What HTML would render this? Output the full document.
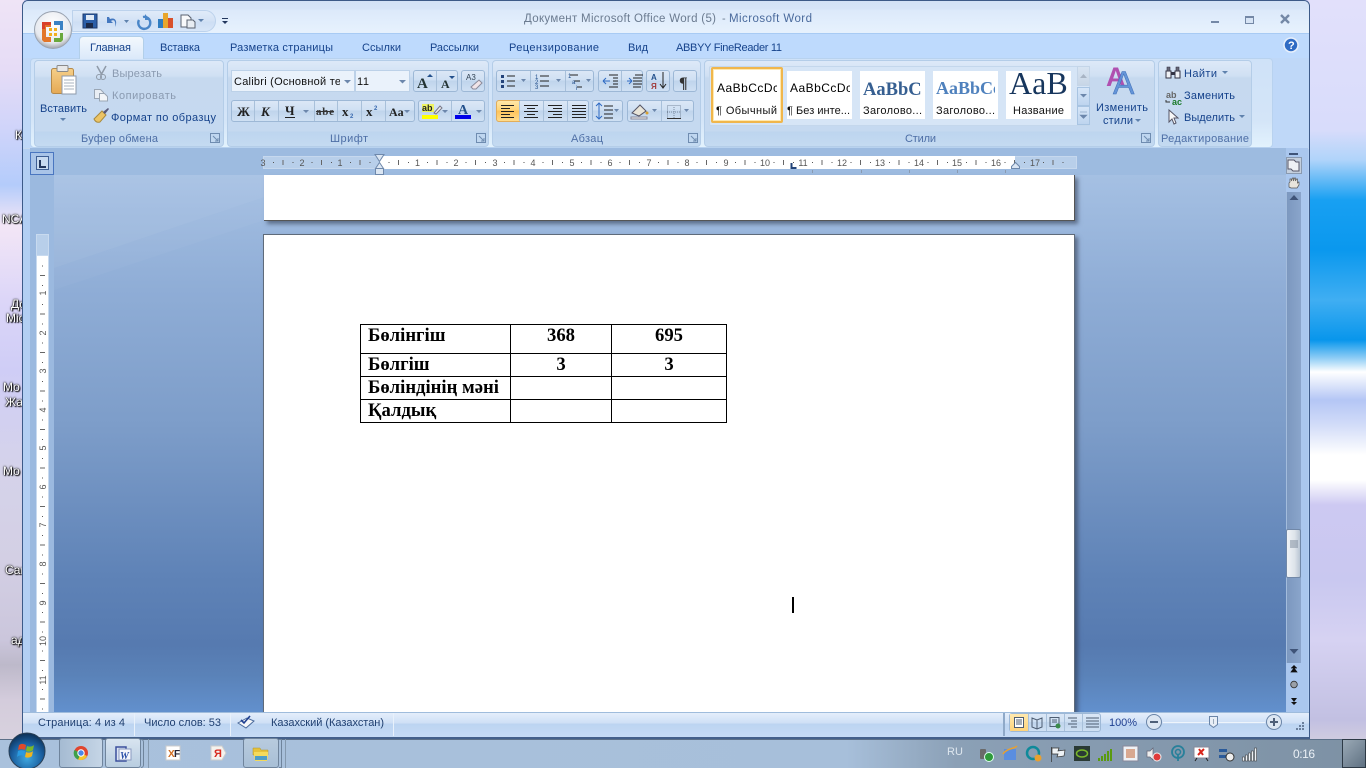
<!DOCTYPE html>
<html lang="ru"><head><meta charset="utf-8"><title>Документ Microsoft Office Word (5) - Microsoft Word</title>
<style>
html,body{margin:0;padding:0;width:1366px;height:768px;overflow:hidden;background:#c8c8f0}
div{position:absolute;box-sizing:border-box}
svg{position:absolute;left:0;top:0}
text{font-family:"Liberation Sans",sans-serif;font-size:11px;fill:#15428b}
.g{fill:#8a9ab0}.c{fill:#4e6fa6}.k{fill:#111}
.grp{top:60px;height:87px;border:1px solid #b4cde8;border-radius:4px;background:linear-gradient(#dde9f8 0,#d0e0f3 15px,#c6d9ef 17px,#c5d9f0 70px,#bdd5ef 71px,#c4daf1 100%)}
.btn{border:1px solid #9db8d6;border-radius:3px;background:linear-gradient(#dbe7f6,#cfe0f3 45%,#bfd4ec 50%,#cfe0f3)}
.dl{position:absolute;font:12px "Liberation Sans",sans-serif;color:#fff;text-shadow:1px 1px 1px #000,0 0 2px #000,0 0 1px #000;white-space:nowrap}
table{position:absolute;left:360px;top:324px;width:366px;height:99px;border-collapse:collapse;table-layout:fixed;font:bold 18.67px "Liberation Serif",serif;color:#000}
td{border:1px solid #000;padding:0 0 0 7px;line-height:21px;vertical-align:top;white-space:nowrap}
td.m{text-align:center;padding:0}
</style></head><body>
<!-- desktop -->
<div style="left:0;top:0;width:24px;height:740px;background:linear-gradient(#efe4f6 0,#e6dcf6 70px,#cfd4fa 130px,#b4ccfb 185px,#f3e6f6 225px,#dcd6f8 300px,#cfcdf6 370px,#d5d3ea 470px,#d3cfe4 560px,#cbc6dc 640px,#bdb9ca 665px,#d4ccdc 700px,#d8d2de 740px)"></div>
<div style="left:1308px;top:0;width:58px;height:740px;background:linear-gradient(#e2e0fb 0,#d8dcfb 130px,#b0d4fa 160px,#18a0f2 200px,#0a98ee 250px,#40aef2 300px,#0896ec 340px,#8ecdf5 358px,#fff 372px,#b4c6f5 400px,#d2dcf8 425px,#fff 455px,#fff 480px,#cdc9f2 505px,#c9c8f0 580px,#d6d2f2 640px,#c2c0e2 720px,#d0cce0 740px)"></div>
<span class="dl" style="left:15px;top:128px">К</span>
<span class="dl" style="left:2px;top:212px">NCA</span>
<span class="dl" style="left:11px;top:297px">До</span>
<span class="dl" style="left:6px;top:311px">Mic</span>
<span class="dl" style="left:3px;top:380px">Мо</span>
<span class="dl" style="left:5px;top:395px">Жа</span>
<span class="dl" style="left:3px;top:464px">Мо</span>
<span class="dl" style="left:5px;top:563px">Сан</span>
<span class="dl" style="left:11px;top:633px">ад</span>

<!-- window -->
<div style="left:22px;top:0;width:1288px;height:739px;background:#b3cff3;border:1px solid #3c5a88;border-bottom:2px solid #44608a;border-radius:6px 6px 0 0;overflow:hidden">
 <div style="left:0;top:0;width:100%;height:32px;background:linear-gradient(#d3e2f6 0,#d6e5f8 8px,#dce9fa 9px,#e6f1fd 30px)"></div>
 <div style="left:0;top:32px;width:100%;height:1px;background:#a8cbf4"></div>
 <div style="left:0;top:33px;width:100%;height:25px;background:#bedafd"></div>
 <div style="left:0;top:57px;width:100%;height:91px;background:#bfd8f8"></div>
 <div style="left:1px;top:147px;width:1285px;height:1px;background:#c6d9ee"></div>
</div>
<!-- ribbon container -->
<div style="left:30px;top:58px;width:1243px;height:90px;border:1px solid #b8d2ef;border-radius:4px;background:linear-gradient(#cfe2f8,#d4e5f8 70%,#e2f2fd)"></div>
<!-- active tab -->
<div style="left:79px;top:36px;width:65px;height:23px;border:1px solid #b2cfe9;border-bottom:0;border-radius:4px 4px 0 0;background:linear-gradient(#f3f8fd,#dbe9fa)"></div>
<!-- QAT pill -->
<div style="left:72px;top:10px;width:144px;height:22px;border:1px solid #bcd2ec;border-radius:0 11px 11px 0;background:linear-gradient(#e0ebf9,#d3e2f5 50%,#cddef4 55%,#d8e6f8)"></div>
<!-- groups -->
<div class="grp" style="left:34px;width:190px"></div>
<div class="grp" style="left:227px;width:262px"></div>
<div class="grp" style="left:492px;width:209px"></div>
<div class="grp" style="left:704px;width:451px"></div>
<div class="grp" style="left:1158px;width:94px"></div>
<!-- font boxes -->
<div style="left:231px;top:70px;width:124px;height:22px;background:#eaf2fb;border:1px solid #bcd1e8"></div>
<div style="left:355px;top:70px;width:55px;height:22px;background:#eaf2fb;border:1px solid #bcd1e8"></div>
<div class="btn" style="left:413px;top:70px;width:45px;height:22px"></div>
<div class="btn" style="left:461px;top:70px;width:24px;height:22px"></div>
<div class="btn" style="left:231px;top:100px;width:184px;height:22px"></div>
<div class="btn" style="left:418px;top:100px;width:67px;height:22px"></div>
<!-- paragraph buttons -->
<div class="btn" style="left:496px;top:70px;width:98px;height:22px"></div>
<div class="btn" style="left:598px;top:70px;width:45px;height:22px"></div>
<div class="btn" style="left:646px;top:70px;width:24px;height:22px"></div>
<div class="btn" style="left:673px;top:70px;width:24px;height:22px"></div>
<div class="btn" style="left:496px;top:100px;width:93px;height:22px"></div>
<div style="left:496px;top:100px;width:24px;height:22px;border:1px solid #e2ad5a;border-radius:3px 0 0 3px;background:linear-gradient(#ffe7a8,#ffd57a 45%,#fdc35a 50%,#ffdc8c)"></div>
<div class="btn" style="left:592px;top:100px;width:31px;height:22px"></div>
<div class="btn" style="left:627px;top:100px;width:67px;height:22px"></div>
<!-- style gallery -->
<div style="left:709px;top:66px;width:381px;height:60px;background:#d6e5f6;border:1px solid #c4d7ec;border-radius:2px"></div>
<div style="left:711px;top:67px;width:72px;height:56px;border:2px solid #f0b64c;border-radius:2px;background:#fff;box-shadow:inset 0 0 0 1px #ffe9b0"></div>
<div style="left:787px;top:71px;width:65px;height:48px;background:#fff"></div>
<div style="left:860px;top:71px;width:65px;height:48px;background:#fff"></div>
<div style="left:933px;top:71px;width:65px;height:48px;background:#fff"></div>
<div style="left:1006px;top:71px;width:65px;height:48px;background:#fff"></div>
<div style="left:1077px;top:66px;width:13px;height:20px;background:linear-gradient(#d8e4f2,#c8d6e6);border:1px solid #c4d5e8"></div>
<div style="left:1077px;top:87px;width:13px;height:19px;background:linear-gradient(#d6e6f8,#bed5ef);border:1px solid #a8c4e2"></div>
<div style="left:1077px;top:106px;width:13px;height:19px;background:linear-gradient(#d6e6f8,#bed5ef);border:1px solid #a8c4e2"></div>

<!-- ruler strip + doc area -->
<div style="left:30px;top:148px;width:1256px;height:27px;background:#9dbbe0"></div>
<div style="left:30px;top:175px;width:24px;height:537px;background:#9bb9df"></div>
<div style="left:54px;top:175px;width:1232px;height:537px;background:linear-gradient(#a5c0e3 0,#8fadd6 115px,#7d9dc9 250px,#5f83b7 400px,#567ab0 470px,#5a82b8 500px,#6290cd 537px)"></div>
<svg width="1366" height="768" style="pointer-events:none"><polygon points="54,268 330,175 54,175" fill="#fff" opacity=".07"/><polygon points="54,290 400,175 330,175 54,268" fill="#fff" opacity=".03"/></svg>
<div style="left:1286px;top:148px;width:22px;height:564px;background:#aac7ee"></div>
<div style="left:1286px;top:192px;width:15px;height:471px;background:linear-gradient(90deg,#7c98bf,#8aa5cb);border-left:1px solid #a3bcdc"></div>
<div style="left:1286px;top:529px;width:15px;height:49px;border:1px solid #7188a8;border-radius:2px;background:linear-gradient(90deg,#f0f3f7,#dde3ea 60%,#b9c5d4)"></div>
<div style="left:1286px;top:157px;width:16px;height:17px;background:#c4cfdd;border:1px solid #8a9ab0"></div>
<div style="left:30px;top:152px;width:24px;height:23px;background:#a9c4e8;border:1px solid #4a76c0"></div>
<div style="left:36px;top:156px;width:13px;height:14px;background:#c8daf0;border:1px solid #3f5f94"></div>
<!-- h ruler -->
<div style="left:263px;top:156px;width:814px;height:13px;background:#b8cfea;border:1px solid #c6d8ee"></div>
<div style="left:379px;top:156px;width:636px;height:13px;background:#fff"></div>
<!-- v ruler -->
<div style="left:36px;top:234px;width:13px;height:22px;background:#b8cfea;border:1px solid #c8daef"></div>
<div style="left:36px;top:256px;width:13px;height:456px;background:#fff;border-left:1px solid #c8daef;border-right:1px solid #c8daef"></div>

<!-- pages -->
<div style="left:264px;top:175px;width:811px;height:46px;background:#fff;border-right:1px solid #555;border-bottom:1px solid #555;box-shadow:3px 3px 4px rgba(40,50,70,.55)"></div>
<div style="left:263px;top:234px;width:812px;height:478px;background:#fff;border:1px solid #5f6b7a;border-bottom:0;box-shadow:3px 3px 4px rgba(40,50,70,.55)"></div>
<table>
<colgroup><col style="width:150px"><col style="width:101px"><col style="width:115px"></colgroup>
<tr style="height:29px"><td>Бөлінгіш</td><td class="m">368</td><td class="m">695</td></tr>
<tr style="height:23px"><td>Бөлгіш</td><td class="m">3</td><td class="m">3</td></tr>
<tr style="height:23px"><td>Бөліндінің мәні</td><td></td><td></td></tr>
<tr style="height:23px"><td>Қалдық</td><td></td><td></td></tr>
</table>
<div style="left:792px;top:597px;width:2px;height:16px;background:#000"></div>

<!-- status bar -->
<div style="left:23px;top:712px;width:1286px;height:25px;background:linear-gradient(#e4eefb 0,#cfe0f6 10px,#bcd4f1 11px,#c6dbf5 100%);border-top:1px solid #9fbcdc"></div>
<div style="left:134px;top:713px;width:1px;height:23px;background:#e8f1fb"></div>
<div style="left:230px;top:713px;width:1px;height:23px;background:#e8f1fb"></div>
<div style="left:393px;top:713px;width:1px;height:23px;background:#e8f1fb"></div>
<div style="left:1003px;top:713px;width:2px;height:23px;background:#8fa9c8"></div>
<div class="btn" style="left:1009px;top:713px;width:92px;height:19px;border-radius:3px"></div>
<div style="left:1010px;top:714px;width:18px;height:17px;background:linear-gradient(#ffe9ae,#ffd47a)"></div>

<!-- taskbar -->
<div style="left:0;top:739px;width:1366px;height:29px;background:linear-gradient(90deg,#a9c1dc 0,#a7bfda 62%,#8ba0b6 70%,#7d91a4 100%);border-top:1px solid #5c7088"></div>
<div style="left:59px;top:738px;width:44px;height:30px;border:1px solid #6f849c;border-radius:3px;background:linear-gradient(90deg,#a5bbd2,#c5d5e6)"></div>
<div style="left:105px;top:738px;width:36px;height:30px;border:1px solid #6f849c;border-radius:3px;background:linear-gradient(#d8e4f0,#b8cde0)"></div>
<div style="left:141px;top:739px;width:3px;height:29px;border:1px solid #6f849c;border-left:0;border-radius:0 3px 3px 0"></div>
<div style="left:148px;top:739px;width:1px;height:29px;background:#8499af"></div>
<div style="left:243px;top:738px;width:36px;height:30px;border:1px solid #6f849c;border-radius:3px;background:linear-gradient(#b8cbde,#a8bfd6)"></div>
<div style="left:279px;top:739px;width:3px;height:29px;border:1px solid #6f849c;border-left:0"></div>
<div style="left:285px;top:739px;width:1px;height:29px;background:#8499af"></div>
<div style="left:1342px;top:739px;width:24px;height:29px;background:linear-gradient(135deg,#9aa9b6,#5f7182);border:1px solid #2d3a46"></div>

<!-- overlay: text and icons -->
<svg width="1366" height="768" viewBox="0 0 1366 768">
<defs>
<pattern id="hr" x="379" y="156" width="38.5" height="13" patternUnits="userSpaceOnUse"><rect x="9.5" y="6" width="1" height="1" fill="#555"/><rect x="19" y="4" width="1" height="5" fill="#666"/><rect x="29" y="6" width="1" height="1" fill="#555"/></pattern>
<pattern id="vr" x="36" y="256" width="13" height="38.5" patternUnits="userSpaceOnUse"><rect x="6" y="9.5" width="1" height="1" fill="#555"/><rect x="4" y="19" width="5" height="1" fill="#666"/><rect x="6" y="29" width="1" height="1" fill="#555"/></pattern>
<radialGradient id="orb" cx=".5" cy=".35" r=".7"><stop offset="0" stop-color="#fff"/><stop offset=".7" stop-color="#e6e9ef"/><stop offset="1" stop-color="#8d8f96"/></radialGradient>
<radialGradient id="st" cx=".5" cy=".7" r=".7"><stop offset="0" stop-color="#3fa8e0"/><stop offset=".6" stop-color="#1a5fa0"/><stop offset="1" stop-color="#0c2e52"/></radialGradient>
<linearGradient id="clip" x1="0" y1="0" x2="0" y2="1"><stop offset="0" stop-color="#f6cf88"/><stop offset="1" stop-color="#e5a955"/></linearGradient>
</defs>

<!-- Office orb -->
<circle cx="53" cy="30" r="18.5" fill="url(#orb)" stroke="#9aa3b0"/>
<path d="M42 22h9v5h-5v10h5v5h-7l-2-2z" fill="#e2762a"/><path d="M42 22h9v3h-6v4h-3z" fill="#d9402a"/>
<path d="M54 21h9v9h-3v-5h-6z" fill="#3b82c4"/><path d="M54 38h6v-5h3v7l-2 2h-7z" fill="#6aa83c"/>
<path d="M49 28h3v3h-3zM54 28h3v3h-3zM49 33h3v3h-3zM54 33h3v3h-3z" fill="#f2b01e"/>

<!-- QAT -->
<rect x="83" y="14" width="14" height="14" fill="#2c5fa8" stroke="#1c3a6e"/><rect x="86" y="15" width="8" height="5" fill="#dfe9f5"/><rect x="86" y="23" width="7" height="5" fill="#1c2a48"/>
<path d="M107 17v6h6l-2-2c3-2 5 0 4 6 3-6 0-10-5-8l-1-2z" fill="#4478c0"/><path d="M124 20h5l-2.500 3z" fill="#5f82ad"/>
<path d="M139 20a6 6 0 1 0 4-3" fill="none" stroke="#4a86c8" stroke-width="2.400"/><path d="M145 14v6h5z" fill="#4a86c8"/>
<rect x="158" y="19" width="5" height="9" fill="#2f7cc0"/><rect x="163" y="13" width="5" height="15" fill="#e8a62c"/><rect x="168" y="18" width="5" height="10" fill="#d8502a"/>
<path d="M181 15h7l3 3v9h-10z" fill="#f8f9fb" stroke="#5a6270"/><path d="M187 20h6l2 2v6h-8z" fill="#e8edf3" stroke="#5a6270"/><path d="M198 19h6l-3 3z" fill="#5f82ad"/>
<rect x="222" y="18" width="6" height="1" fill="#23375e"/><path d="M222 21h6l-3 3z" fill="#23375e"/>

<!-- title -->
<text x="524" y="22" textLength="192" style="fill:#6b7b90;font-size:11.500px">Документ Microsoft Office Word (5)</text>
<text x="722" y="22" style="fill:#6b7b90">-</text>
<text x="729" y="22" textLength="83" style="fill:#4a6a9c;font-size:11.500px">Microsoft Word</text>
<rect x="1211" y="21" width="8" height="2" fill="#7488a6"/>
<rect x="1245.500" y="16.500" width="8" height="7" fill="#d7e4f5" stroke="#7488a6"/><rect x="1245" y="16" width="9" height="2" fill="#7488a6"/>
<path d="M1281 15l8 8M1289 15l-8 8" stroke="#7488a6" stroke-width="2.400"/>
<circle cx="1291" cy="45" r="7" fill="#2f6bc4" stroke="#e8f0fb" stroke-width="1.500"/><text x="1288" y="49" style="fill:#fff;font-weight:bold;font-size:11px">?</text>

<!-- tabs -->
<text x="90" y="51" textLength="41">Главная</text>
<text x="160" y="51" textLength="40">Вставка</text>
<text x="230" y="51" textLength="103">Разметка страницы</text>
<text x="362" y="51" textLength="39">Ссылки</text>
<text x="430" y="51" textLength="49">Рассылки</text>
<text x="509" y="51" textLength="90">Рецензирование</text>
<text x="628" y="51" textLength="20">Вид</text>
<text x="676" y="51" textLength="106">ABBYY FineReader 11</text>

<!-- clipboard -->
<rect x="51.500" y="68.500" width="22" height="25" rx="2" fill="url(#clip)" stroke="#b58a4a"/>
<rect x="57" y="65.500" width="11" height="6" rx="1" fill="#e8e8e8" stroke="#8a8a8a"/>
<path d="M62 76h14v18h-14z" fill="#fff" stroke="#8d9aab"/>
<path d="M64 80h10M64 83h10M64 86h10M64 89h10" stroke="#a9b3bf"/>
<text x="40" y="112" textLength="47">Вставить</text><path d="M60 118h6l-3 3z" fill="#5f82ad"/>
<path d="M97 66l5 9M106 66l-5 9" stroke="#8f9aa8" stroke-width="1.500"/><circle cx="99" cy="77" r="2.500" fill="none" stroke="#8f9aa8"/><circle cx="103" cy="77" r="2.500" fill="none" stroke="#8f9aa8"/>
<text x="112" y="77" textLength="50" class="g">Вырезать</text>
<path d="M94.500 89.500h6l3 3v6h-9z" fill="#e9eef4" stroke="#9aa6b4"/><path d="M99.500 93.500h5l3 3v4.500h-8z" fill="#f3f6f9" stroke="#9aa6b4"/>
<text x="112" y="99" textLength="64" class="g">Копировать</text>
<path d="M94 119l8-8 4 4-6 7c-3 1-5-1-6-3z" fill="#ecc465" stroke="#a88a3c"/><path d="M103 112l5-4 1 1-4 5z" fill="#5a5a7a"/>
<text x="111" y="121" textLength="105">Формат по образцу</text>
<text x="81" y="142" textLength="77" class="c">Буфер обмена</text>
<g fill="none" stroke="#6f8cb0"><rect x="210.500" y="133.500" width="9" height="9"/><path d="M213 136l5 5M218 138v3h-3"/></g>

<!-- font group -->
<svg x="234" y="74" width="106" height="16"><text x="0" y="11" style="fill:#111" textLength="107">Calibri (Основной те</text></svg>
<path d="M344 80h7l-3.500 3.500z" fill="#6c87ac"/>
<text x="357" y="85" style="fill:#111" textLength="12">11</text><path d="M399 80h7l-3.500 3.500z" fill="#6c87ac"/>
<rect x="436" y="71" width="1" height="20" fill="#a8c0da"/>
<text x="417" y="88" style="font-family:'Liberation Serif',serif;font-weight:bold;font-size:15px;fill:#233">A</text><path d="M427 77h6l-3-3z" fill="#23508c"/>
<text x="441" y="88" style="font-family:'Liberation Serif',serif;font-weight:bold;font-size:12px;fill:#233">A</text><path d="M449 76h6l-3 3z" fill="#23508c"/>
<text x="466" y="80" style="font-size:8px;fill:#345">A3</text><path d="M471 87l8-7 3 3-6 6h-3z" fill="#f0e4e8" stroke="#8a8a9a"/>
<g fill="#a8c0da"><rect x="254" y="101" width="1" height="20"/><rect x="278" y="101" width="1" height="20"/><rect x="314" y="101" width="1" height="20"/><rect x="337" y="101" width="1" height="20"/><rect x="361" y="101" width="1" height="20"/><rect x="385" y="101" width="1" height="20"/></g>
<g><text x="237" y="116" style="font-family:'Liberation Serif',serif;font-weight:bold;font-size:13px;fill:#222">Ж</text>
<text x="261" y="116" style="font-family:'Liberation Serif',serif;font-weight:bold;font-style:italic;font-size:13px;fill:#222">К</text>
<text x="285" y="115" style="font-family:'Liberation Serif',serif;font-weight:bold;font-size:13px;fill:#222">Ч</text><rect x="285" y="117" width="10" height="1" fill="#222"/>
<text x="316" y="115" style="font-family:'Liberation Serif',serif;font-weight:bold;font-size:11px;fill:#333" textLength="18">abe</text><rect x="316" y="111" width="18" height="1" fill="#333"/>
<text x="342" y="116" style="font-family:'Liberation Serif',serif;font-weight:bold;font-size:13px;fill:#222">x</text><text x="350" y="118" style="font-size:6px;fill:#3a6ab0;font-weight:bold">2</text>
<text x="366" y="116" style="font-family:'Liberation Serif',serif;font-weight:bold;font-size:13px;fill:#222">x</text><text x="374" y="110" style="font-size:6px;fill:#3a6ab0;font-weight:bold">2</text>
<text x="389" y="116" style="font-family:'Liberation Serif',serif;font-weight:bold;font-size:12px;fill:#222">Aa</text></g>
<g fill="#6c87ac"><path d="M303 110h6l-3 3zM404 110h6l-3 3zM442 110h6l-3 3zM476 110h6l-3 3z"/></g>
<rect x="422" y="104" width="12" height="8" fill="#ff0" opacity=".6"/><text x="422" y="111" style="font-size:9px;fill:#222;font-weight:bold">ab</text><rect x="422" y="115" width="16" height="4" fill="#ff0"/>
<path d="M434 113l6-7 2 2-6 6z" fill="#eee" stroke="#778"/>
<text x="458" y="114" style="font-family:'Liberation Serif',serif;font-weight:bold;font-size:14px;fill:#23508c">A</text><rect x="455" y="115" width="16" height="4" fill="#0000e8"/>
<rect x="451" y="101" width="1" height="20" fill="#a8c0da"/>
<text x="330" y="142" textLength="38" class="c">Шрифт</text>
<g fill="none" stroke="#6f8cb0"><rect x="476.500" y="133.500" width="9" height="9"/><path d="M479 136l5 5M484 138v3h-3"/></g>

<!-- paragraph -->
<g fill="#a8c0da"><rect x="530" y="71" width="1" height="20"/><rect x="565" y="71" width="1" height="20"/><rect x="621" y="71" width="1" height="20"/><rect x="543" y="101" width="1" height="20"/><rect x="519" y="101" width="1" height="20"/><rect x="567" y="101" width="1" height="20"/><rect x="661" y="101" width="1" height="20"/></g>
<g fill="#23437a"><rect x="501" y="75" width="3" height="3"/><rect x="501" y="80" width="3" height="3"/><rect x="501" y="85" width="3" height="3"/></g>
<path d="M507 76h8M507 81h8M507 86h8M540 76h9M540 81h9M540 86h9M570 75h8M574 81h6M577 87h5" stroke="#222"/>
<text x="535" y="79" style="font-size:6px;fill:#23508c">1</text><text x="535" y="84" style="font-size:6px;fill:#23508c">2</text><text x="535" y="89" style="font-size:6px;fill:#23508c">3</text>
<text x="568" y="78" style="font-size:6px;fill:#23508c">1</text><text x="572" y="84" style="font-size:6px;fill:#23508c">a</text><text x="576" y="90" style="font-size:6px;fill:#23508c">i</text>
<g fill="#6c87ac"><path d="M521 79h5l-2.500 3zM556 79h5l-2.500 3zM586 79h5l-2.500 3zM614 109h5l-2.500 3zM652 109h5l-2.500 3zM684 109h5l-2.500 3z"/></g>
<path d="M609 75h9M613 78h5M613 81h5M613 84h5M609 87h9M635 75h8M633 78h9M633 81h9M633 84h9M633 87h8" stroke="#222"/>
<path d="M603 81h7M603 81l3-3M603 81l3 3M627 81h5M632 81l-3-3M632 81l-3 3" stroke="#2f6bc4" fill="none"/>
<text x="651" y="80" style="font-size:8px;fill:#23508c;font-weight:bold">A</text><text x="651" y="89" style="font-size:8px;fill:#a03a3a;font-weight:bold">Я</text><path d="M663 72v15M660 84l3 4 3-4" stroke="#222" fill="none"/>
<text x="679" y="88" style="font-family:'Liberation Serif',serif;font-weight:bold;font-size:16px;fill:#333">¶</text>
<path d="M501 105.500h13M501 108.500h9M501 111.500h13M501 114.500h9M501 117.500h13" stroke="#222"/>
<path d="M524 105.500h14M527 108.500h8M524 111.500h14M527 114.500h8M524 117.500h14" stroke="#222"/>
<path d="M548 105.500h14M553 108.500h9M548 111.500h14M553 114.500h9M548 117.500h14" stroke="#222"/>
<path d="M572 105.500h14M572 108.500h14M572 111.500h14M572 114.500h14M572 117.500h14" stroke="#222"/>
<path d="M599 103v16M596 106l3-3 3 3M596 116l3 3 3-3" stroke="#2f6bc4" fill="none"/><path d="M604 106h9M604 110h9M604 114h9M604 118h9" stroke="#222"/>
<path d="M632 113l8-8 6 6-7 5z" fill="#e8e4d8" stroke="#556"/><rect x="631" y="117" width="16" height="2" fill="#f0f0f0" stroke="#889"/><circle cx="647" cy="113" r="1.500" fill="#d8a030"/>
<rect x="667.500" y="105.500" width="13" height="13" fill="none" stroke="#7a8ba0" stroke-dasharray="1 1"/><path d="M674 105v14M667 112h14" stroke="#7a8ba0" stroke-dasharray="1 1"/><path d="M667 118.500h14" stroke="#333"/>
<text x="571" y="142" textLength="32" class="c">Абзац</text>
<g fill="none" stroke="#6f8cb0"><rect x="688.500" y="133.500" width="9" height="9"/><path d="M691 136l5 5M696 138v3h-3"/></g>

<!-- styles -->
<svg x="717" y="78" width="60" height="20"><text x="0" y="14" style="fill:#000;font-size:12px" textLength="62">AaBbCcDc</text></svg>
<text x="716" y="114" style="fill:#111" textLength="61">¶ Обычный</text>
<svg x="790" y="78" width="60" height="20"><text x="0" y="14" style="fill:#000;font-size:12px" textLength="62">AaBbCcDc</text></svg>
<text x="787" y="114" style="fill:#111" textLength="63">¶ Без инте...</text>
<svg x="863" y="74" width="59" height="26"><text x="0" y="21" style="font-family:'Liberation Serif',serif;font-weight:bold;font-size:18.500px;fill:#365f91">AaBbCc</text></svg>
<text x="863" y="114" style="fill:#111" textLength="59">Заголово...</text>
<svg x="936" y="74" width="59" height="26"><text x="0" y="20" style="font-family:'Liberation Serif',serif;font-weight:bold;font-size:18px;fill:#4f81bd">AaBbCc</text></svg>
<text x="936" y="114" style="fill:#111" textLength="59">Заголово...</text>
<svg x="1008" y="66" width="60" height="34"><text x="1" y="28" style="font-family:'Liberation Serif',serif;font-size:32px;fill:#17365d">AaB</text></svg>
<text x="1013" y="114" style="fill:#111" textLength="51">Название</text>
<path d="M1080 78l3.500-4 3.500 4z" fill="#a8b4c4"/><path d="M1080 94h7l-3.500 3.500z" fill="#6c87ac"/><path d="M1080 112h7M1080 115h7l-3.500 3.500z" fill="#6c87ac" stroke="#6c87ac" stroke-width=".6"/>
<text x="1106" y="86" style="font-weight:bold;font-size:27px;fill:#b050b0">A</text>
<text x="1113" y="94" style="font-size:32px;fill:#5c8fd6;fill-opacity:.92;stroke:#3f6fb8;stroke-width:.5">A</text>
<text x="1096" y="111" textLength="52">Изменить</text><text x="1103" y="124" textLength="30">стили</text><path d="M1135 119h6l-3 3z" fill="#5f82ad"/>
<text x="905" y="142" textLength="31" class="c">Стили</text>
<g fill="none" stroke="#6f8cb0"><rect x="1141.500" y="133.500" width="9" height="9"/><path d="M1144 136l5 5M1149 138v3h-3"/></g>

<!-- edit -->
<path d="M1166 71h5v7h-5zM1175 71h5v7h-5z" fill="#f0f2f6" stroke="#334"/><path d="M1167 67h3v4h-3zM1176 67h3v4h-3z" fill="#667" stroke="#334" stroke-width=".6"/><rect x="1171" y="72" width="4" height="3" fill="#334"/>
<text x="1184" y="77" textLength="33">Найти</text><path d="M1222 71h6l-3 3z" fill="#5f82ad"/>
<text x="1166" y="98" style="font-size:9px;font-weight:bold;fill:#666">ab</text><text x="1172" y="105" style="font-size:9px;font-weight:bold;fill:#1a7a2a">ac</text><path d="M1166 100v2h4" fill="none" stroke="#333"/>
<text x="1184" y="99" textLength="51">Заменить</text>
<path d="M1169 110v12l3-3 2 5 2-1-2-5h4z" fill="#f8f8f8" stroke="#556"/>
<text x="1184" y="121" textLength="51">Выделить</text><path d="M1239 115h6l-3 3z" fill="#5f82ad"/>
<text x="1161" y="142" textLength="88" class="c">Редактирование</text>

<!-- h ruler -->
<rect x="263" y="156" width="814" height="13" fill="url(#hr)"/>
<g>
<text x="263" y="166" style="font-size:9px;fill:#555" text-anchor="middle">3</text><text x="302" y="166" style="font-size:9px;fill:#555" text-anchor="middle">2</text><text x="340" y="166" style="font-size:9px;fill:#555" text-anchor="middle">1</text>
<text x="417.500" y="166" style="font-size:9px;fill:#555" text-anchor="middle">1</text><text x="456" y="166" style="font-size:9px;fill:#555" text-anchor="middle">2</text><text x="495" y="166" style="font-size:9px;fill:#555" text-anchor="middle">3</text><text x="533" y="166" style="font-size:9px;fill:#555" text-anchor="middle">4</text><text x="572" y="166" style="font-size:9px;fill:#555" text-anchor="middle">5</text><text x="610" y="166" style="font-size:9px;fill:#555" text-anchor="middle">6</text><text x="649" y="166" style="font-size:9px;fill:#555" text-anchor="middle">7</text><text x="687" y="166" style="font-size:9px;fill:#555" text-anchor="middle">8</text><text x="726" y="166" style="font-size:9px;fill:#555" text-anchor="middle">9</text><text x="765" y="166" style="font-size:9px;fill:#555" text-anchor="middle">10</text><text x="803" y="166" style="font-size:9px;fill:#555" text-anchor="middle">11</text><text x="842" y="166" style="font-size:9px;fill:#555" text-anchor="middle">12</text><text x="880" y="166" style="font-size:9px;fill:#555" text-anchor="middle">13</text><text x="919" y="166" style="font-size:9px;fill:#555" text-anchor="middle">14</text><text x="957" y="166" style="font-size:9px;fill:#555" text-anchor="middle">15</text><text x="996" y="166" style="font-size:9px;fill:#555" text-anchor="middle">16</text><text x="1035" y="166" style="font-size:9px;fill:#555" text-anchor="middle">17</text></g>
<path d="M375 154.500h9l-4.500 7zM375.500 168.500l4-6 4 6z" fill="#dbe6f3" stroke="#6e88ab"/><rect x="375.500" y="168.500" width="8" height="6" fill="#dbe6f3" stroke="#6e88ab"/>
<path d="M1011.500 168.500v-2l4-4 4 4v2z" fill="#dbe6f3" stroke="#6e88ab"/>
<path d="M791.500 163v5h5" fill="none" stroke="#23457a" stroke-width="2"/>
<path d="M812.500 170v3M861.500 170v3M909.500 170v3M957.500 170v3M1005.500 170v3" stroke="#8a9ab0"/>
<path d="M40 160v7h6" fill="none" stroke="#23375e" stroke-width="2"/>

<!-- v ruler -->
<rect x="37" y="256" width="11" height="456" fill="url(#vr)"/>
<g>
<text transform="translate(46,293) rotate(-90)" text-anchor="middle" style="font-size:9px;fill:#555">1</text>
<text transform="translate(46,333) rotate(-90)" text-anchor="middle" style="font-size:9px;fill:#555">2</text>
<text transform="translate(46,371) rotate(-90)" text-anchor="middle" style="font-size:9px;fill:#555">3</text>
<text transform="translate(46,410) rotate(-90)" text-anchor="middle" style="font-size:9px;fill:#555">4</text>
<text transform="translate(46,448) rotate(-90)" text-anchor="middle" style="font-size:9px;fill:#555">5</text>
<text transform="translate(46,487) rotate(-90)" text-anchor="middle" style="font-size:9px;fill:#555">6</text>
<text transform="translate(46,525) rotate(-90)" text-anchor="middle" style="font-size:9px;fill:#555">7</text>
<text transform="translate(46,564) rotate(-90)" text-anchor="middle" style="font-size:9px;fill:#555">8</text>
<text transform="translate(46,603) rotate(-90)" text-anchor="middle" style="font-size:9px;fill:#555">9</text>
<text transform="translate(46,641) rotate(-90)" text-anchor="middle" style="font-size:9px;fill:#555">10</text>
<text transform="translate(46,680) rotate(-90)" text-anchor="middle" style="font-size:9px;fill:#555">11</text></g>

<!-- right scroll -->
<rect x="1289" y="153" width="9" height="2" fill="#3f5478"/>
<path d="M1288 160h6l2 2h3v9h-6l-2-2h-3z" fill="#eef1f5" stroke="#556"/>
<path d="M1289 187v-4l1-1v-3h1.500v2l1-3h1v3l1-3h1v3l1-2h1v4l1-1h.5v3l-2 3h-6z" fill="#e8e4dc" stroke="#555" stroke-width=".7"/>
<path d="M1289.500 200l4.500-5 4.500 5z" fill="#3f5478"/><path d="M1289.500 649h9l-4.500 5z" fill="#3f5478"/>
<path d="M1290 541h8M1290 543h8M1290 545h8M1290 547h8" stroke="#7d8b9b"/>
<path d="M1291 668h6M1291 672h6l-3-4z" fill="#111" stroke="#111" stroke-width=".7"/><path d="M1294 665l-3 3h6z" fill="#111"/>
<circle cx="1294" cy="684.500" r="3.300" fill="#9aa0a8" stroke="#333" stroke-width=".8"/>
<path d="M1291 698h6l-3 4zM1291 702h6l-3 3z" fill="#111"/>

<!-- status text -->
<text x="38" y="726" textLength="87" style="fill:#1f3f70">Страница: 4 из 4</text>
<text x="144" y="726" textLength="77" style="fill:#1f3f70">Число слов: 53</text>
<path d="M238 723l8 5 8-7-7-3z" fill="#f4f6f9" stroke="#4a6a9c"/><path d="M241 720l3 3 6-7" fill="none" stroke="#1f3f90" stroke-width="1.600"/>
<text x="271" y="726" textLength="113" style="fill:#1f3f70">Казахский (Казахстан)</text>
<g fill="none" stroke="#4d5d72"><rect x="1014.500" y="717.500" width="9" height="10" fill="#fff"/><path d="M1016 720h6M1016 722h6M1016 724h6M1032 718l5 2 5-2v9l-5 2-5-2zM1037 720v9M1050 717.500h9v9h-9zM1052 720h5M1052 722h5M1068 718h9M1071 721h6M1068 724h9M1071 727h6M1086 718h13M1086 721h13M1086 724h13M1086 727h13"/></g>
<circle cx="1058" cy="726" r="2.500" fill="#3a8a4a"/>
<g fill="#a8c0da"><rect x="1028" y="714" width="1" height="17"/><rect x="1046" y="714" width="1" height="17"/><rect x="1064" y="714" width="1" height="17"/><rect x="1082" y="714" width="1" height="17"/></g>
<text x="1109" y="726" textLength="28" style="fill:#1f3f90">100%</text>
<circle cx="1154" cy="722" r="7.500" fill="#dce6f2" stroke="#6a85a8"/><rect x="1150" y="721" width="8" height="2" fill="#4e5f78"/>
<rect x="1163" y="722" width="102" height="1" fill="#eef4fb"/>
<path d="M1209.500 716.500h8v8l-4 3-4-3z" fill="#e8eef6" stroke="#6a85a8"/><rect x="1213" y="719" width="1" height="5" fill="#9ab"/>
<circle cx="1274" cy="722" r="7.500" fill="#dce6f2" stroke="#6a85a8"/><path d="M1270 722h8M1274 718v8" stroke="#4e5f78" stroke-width="2"/>
<g fill="#6a7f9c"><rect x="1296" y="728" width="2" height="2"/><rect x="1299" y="728" width="2" height="2"/><rect x="1302" y="728" width="2" height="2"/><rect x="1299" y="725" width="2" height="2"/><rect x="1302" y="725" width="2" height="2"/><rect x="1302" y="722" width="2" height="2"/></g>

<!-- start orb -->
<circle cx="27" cy="751" r="18" fill="url(#st)" stroke="#2a3f55"/>
<path d="M19 745c3-2 5-1 7 0l-1 5c-2-1-5-1-7 0z" fill="#e04a2a"/><path d="M27 746c2 1 5 1 7-1l-1 5c-2 2-5 2-7 1z" fill="#7ab82a"/>
<path d="M18 751c2-1 4-1 7 0l-1 5c-2-1-5-1-7 1z" fill="#2a9ae0"/><path d="M26 752c2 1 5 1 7-1l-1 5c-2 2-5 2-7 1z" fill="#f0b41e"/>

<!-- taskbar icons -->
<circle cx="81" cy="753" r="7" fill="#e0452e"/><path d="M81 753l6 3a7 7 0 0 1-9 3.600z" fill="#f6c62e"/><path d="M81 753l-3 6.600a7 7 0 0 1-3.600-9.600z" fill="#3ea04a"/><circle cx="81" cy="753" r="3.200" fill="#4a86e8" stroke="#fff"/>
<path d="M116 747h10v14h-10z" fill="#dbe4f4" stroke="#3a4f9c" stroke-width="1.500"/><rect x="119" y="749" width="12" height="11" fill="#f4f6fb" stroke="#8a9ac0"/><text x="120" y="759" style="font-family:'Liberation Serif',serif;font-style:italic;font-weight:bold;font-size:10px;fill:#2a4fa8">W</text>
<rect x="166" y="746" width="14" height="14" fill="#fff" stroke="#ccc"/><text x="168" y="757" style="font-size:10px;font-weight:bold;fill:#d06a1e">X</text><text x="174" y="757" style="font-size:10px;font-weight:bold;fill:#223">F</text>
<path d="M211 746h11l4 7-4 7h-11z" fill="#f4f2ee" stroke="#ccc"/><text x="214" y="757" style="font-size:11px;font-weight:bold;fill:#d82a1e">Я</text>
<path d="M253 748h7l1 2h7v5h-15z" fill="#e6c23a" stroke="#b09428" stroke-width=".5"/><path d="M254 752h14v4l-1 5h-12l-1-5z" fill="#f4da5c"/><rect x="255" y="756" width="12" height="4" fill="#4e9ec8"/>

<!-- tray -->
<text x="947" y="755" textLength="16" style="fill:#dde6ee;font-size:11px">RU</text>
<rect x="980" y="749" width="6" height="10" rx="1" fill="#6a6a6a"/><circle cx="989" cy="757" r="4.500" fill="#2e9a3a" stroke="#dfe"/>
<rect x="1004" y="749" width="12" height="11" fill="#5a8ee0"/><path d="M1003 754c4-6 11-5 14-8" stroke="#e8a030" stroke-width="1.500" fill="none"/>
<circle cx="1033" cy="753" r="6" fill="none" stroke="#0f8a9a" stroke-width="2.500"/><circle cx="1038" cy="758" r="3.500" fill="#e8a030"/>
<path d="M1051.500 747v15M1052 748h7l-1 3 7-1-1 6-7 1 1-3h-6z" fill="#eef2f5" stroke="#333" stroke-width=".7"/>
<rect x="1074" y="746" width="16" height="15" fill="#2a3a34"/><ellipse cx="1082" cy="753.500" rx="5.500" ry="3.500" fill="none" stroke="#7ab82a" stroke-width="1.500"/>
<g fill="#5a9a10"><rect x="1098" y="758" width="2" height="3"/><rect x="1101" y="756" width="2" height="5"/><rect x="1104" y="754" width="2" height="7"/><rect x="1107" y="751" width="2" height="10"/><rect x="1110" y="749" width="2" height="12"/></g>
<rect x="1123" y="746" width="15" height="15" fill="#eef1f5" stroke="#889"/><rect x="1126" y="749" width="9" height="9" fill="#d8a890"/>
<path d="M1147 751h3l3-3v12l-3-3h-3z" fill="#eee" stroke="#667" stroke-width=".7"/><circle cx="1157" cy="757" r="4" fill="#e03a3a" stroke="#eee"/>
<circle cx="1178" cy="752" r="6" fill="none" stroke="#28809a" stroke-width="1.800"/><circle cx="1178" cy="752" r="2.500" fill="none" stroke="#28809a" stroke-width="1.500"/><path d="M1178 754v7" stroke="#28809a" stroke-width="1.800"/>
<rect x="1194" y="747" width="15" height="11" fill="#fff" stroke="#889"/><path d="M1198 755l6-6M1199 749l4 6" stroke="#d8241a" stroke-width="2"/><path d="M1197 758l-2 3M1206 758l2 3" stroke="#222"/>
<path d="M1219 749h8v3h-8zM1219 755h8v3h-8z" fill="#2a5a9a"/><circle cx="1230" cy="757" r="4" fill="#eee" stroke="#333"/>
<g fill="#eef1f5" stroke="#333" stroke-width=".5"><rect x="1242.500" y="757" width="2" height="4"/><rect x="1245.500" y="755" width="2" height="6"/><rect x="1248.500" y="753" width="2" height="8"/><rect x="1251.500" y="751" width="2" height="10"/><rect x="1254.500" y="748" width="2" height="13"/></g>
<text x="1293" y="758" textLength="22" style="fill:#eaf0f5;font-size:12px">0:16</text>
</svg>
</body></html>
